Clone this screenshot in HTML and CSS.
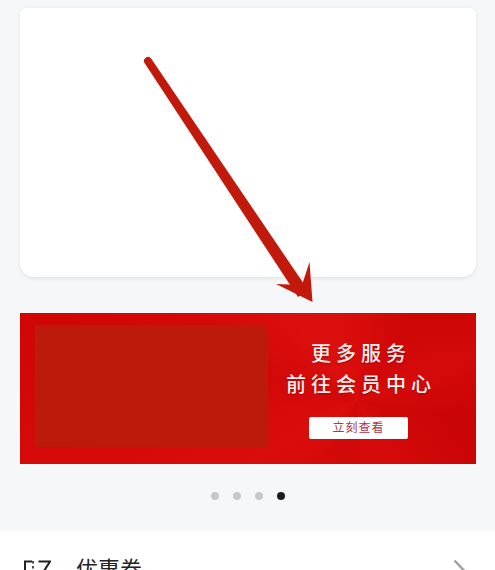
FILE: index.html
```html
<!DOCTYPE html>
<html lang="zh">
<head>
<meta charset="utf-8">
<title>会员</title>
<link rel="stylesheet" href="styles.css">
</head>
<body>
<main class="page">
  <section class="card"></section>
  <section class="banner">
    <div class="banner-redacted"></div>
    <div class="banner-copy">
      <p class="banner-line">更多服务</p>
      <p class="banner-line">前往会员中心</p>
      <span class="banner-btn">立刻查看</span>
    </div>
  </section>
  <div class="dots">
    <span class="dot"></span>
    <span class="dot"></span>
    <span class="dot"></span>
    <span class="dot dot-active"></span>
  </div>
  <section class="list">
    <div class="row">
      <svg class="row-icon" viewBox="0 0 28 24" fill="none" stroke="#222" stroke-width="2">
        <path d="M2 24V3.5H9"/>
        <path d="M10 3V5.5M10 8V10.5" stroke-width="1.6"/>
        <path d="M15.5 3.5H27L21 13"/>
      </svg>
      <span class="row-label">优惠券</span>
      <svg class="row-chevron" viewBox="0 0 12 22" fill="none" stroke="#a0a0a0" stroke-width="2.4">
        <path d="M1.5 1.5L10.5 11L1.5 20.5"/>
      </svg>
    </div>
  </section>
</main>
<svg class="arrow" viewBox="0 0 495 570">
  <path class="arrow-mark" d="M144.7 63.3A4 4 0 0 1 151.3 58.7L308 290L298 297Z"/>
  <path class="arrow-mark" d="M312.5 302L309.5 262L302 285L276 284Z"/>
</svg>
</body>
</html>
```

FILE: styles.css
```css
* { box-sizing: border-box; }

html, body {
  margin: 0;
  height: 100%;
  overflow: hidden;
}

body {
  background: #f6f7f8;
  font-family: "Liberation Sans", "Noto Sans CJK SC", sans-serif;
  position: relative;
}

.page {
  padding-top: 8px;
}

.card {
  height: 269px;
  margin: 0 19px 0 20px;
  background: #fff;
  border-radius: 6px 6px 14px 14px;
  box-shadow: 0 1px 4px rgba(0, 0, 0, 0.1);
}

.banner {
  height: 151px;
  margin: 36px 19px 0 20px;
  padding: 12px 0 17px 15px;
  display: flex;
  background:
    conic-gradient(from 0deg at 74% 58%,
      rgba(255, 40, 30, 0.10) 0deg,
      rgba(190, 0, 0, 0.10) 35deg,
      rgba(255, 40, 30, 0.12) 70deg,
      rgba(185, 0, 0, 0.14) 100deg,
      rgba(255, 40, 30, 0.06) 150deg,
      rgba(190, 0, 0, 0.14) 195deg,
      rgba(255, 40, 30, 0.12) 240deg,
      rgba(190, 0, 0, 0.10) 285deg,
      rgba(255, 50, 40, 0.14) 325deg,
      rgba(255, 40, 30, 0.10) 360deg),
    linear-gradient(90deg, #d20707 0%, #d50a0a 70%, #cb0505 100%);
}

.banner-redacted {
  width: 233px;
  background: #bc1a0a;
}

.banner-copy {
  flex: 1;
  display: flex;
  flex-direction: column;
  align-items: center;
  padding-top: 14px;
  padding-right: 27px;
  color: #fbeeee;
}

.banner-line {
  margin: 0 -5px 0 0;
  font-size: 20px;
  line-height: 31px;
  letter-spacing: 5px;
  font-weight: 500;
  text-shadow: 0 1px 2px rgba(120, 0, 0, 0.5);
}

.banner-btn {
  margin-top: 16px;
  width: 99px;
  height: 22px;
  background: #fff;
  border-radius: 2px;
  color: #a9374a;
  font-size: 12px;
  line-height: 22px;
  text-align: center;
  letter-spacing: 1px;
}

.dots {
  display: flex;
  justify-content: center;
  gap: 14px;
  margin-top: 28px;
  height: 8px;
}

.dot {
  width: 8px;
  height: 8px;
  border-radius: 50%;
  background: #c8c8ca;
}

.dot-active {
  background: #1c1c1e;
}

.list {
  margin-top: 31px;
  background: #fff;
  height: 60px;
}

.row {
  display: flex;
  align-items: center;
  padding: 25px 30px 0 23px;
}

.row-icon {
  width: 28px;
  height: 24px;
  flex: none;
}

.row-label {
  margin-left: 25px;
  font-size: 22px;
  line-height: 28px;
  color: #222;
}

.row-chevron {
  margin-left: auto;
  width: 12px;
  height: 22px;
}

.arrow {
  position: absolute;
  left: 0;
  top: 0;
  width: 495px;
  height: 570px;
  pointer-events: none;
}

.arrow-mark {
  fill: #c11a0d;
}
```
